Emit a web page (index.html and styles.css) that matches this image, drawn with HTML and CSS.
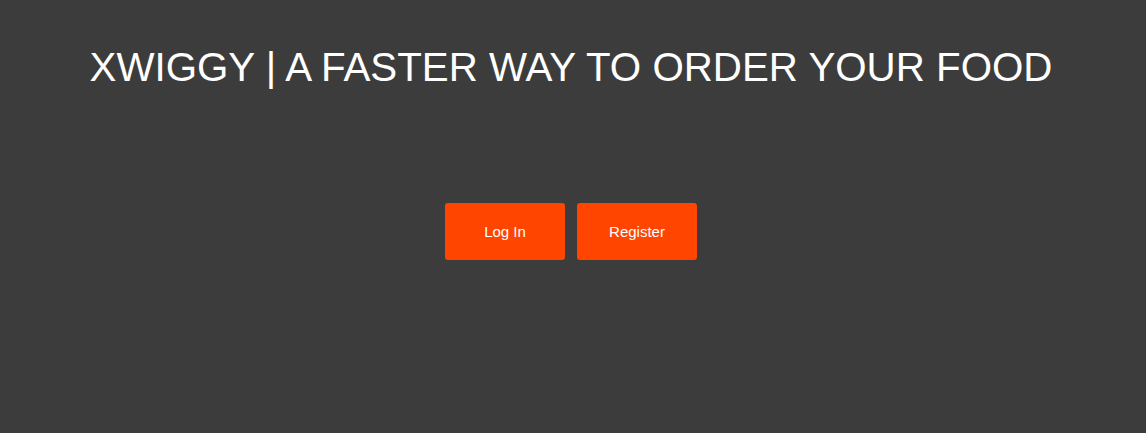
FILE: index.html
```html
<!DOCTYPE html>
<html>
<head>
<meta charset="utf-8">
<link rel="stylesheet" href="styles.css">
</head>
<body>
<div class="page">
  <h1 class="title">XWIGGY | A FASTER WAY TO ORDER YOUR FOOD</h1>
  <div class="actions">
    <button class="btn">Log In</button>
    <button class="btn">Register</button>
  </div>
</div>
</body>
</html>
```
FILE: styles.css
```css
html, body {
  margin: 0;
  padding: 0;
  background: #3c3c3c;
  height: 100%;
}
.page {
  font-family: "Liberation Sans", Arial, sans-serif;
  color: #fff;
  display: flex;
  flex-direction: column;
  align-items: center;
  padding-top: 45px;
  padding-right: 4px;
}
.title {
  margin: 0;
  font-size: 40.3px;
  font-weight: normal;
  line-height: 46px;
  text-align: center;
}
.actions {
  display: flex;
  gap: 12px;
  margin-top: 112px;
}
.btn {
  width: 120px;
  height: 57px;
  border: none;
  border-radius: 3px;
  background: #ff4500;
  color: #fff;
  font-family: "Liberation Sans", Arial, sans-serif;
  font-size: 15px;
  cursor: pointer;
}
```
